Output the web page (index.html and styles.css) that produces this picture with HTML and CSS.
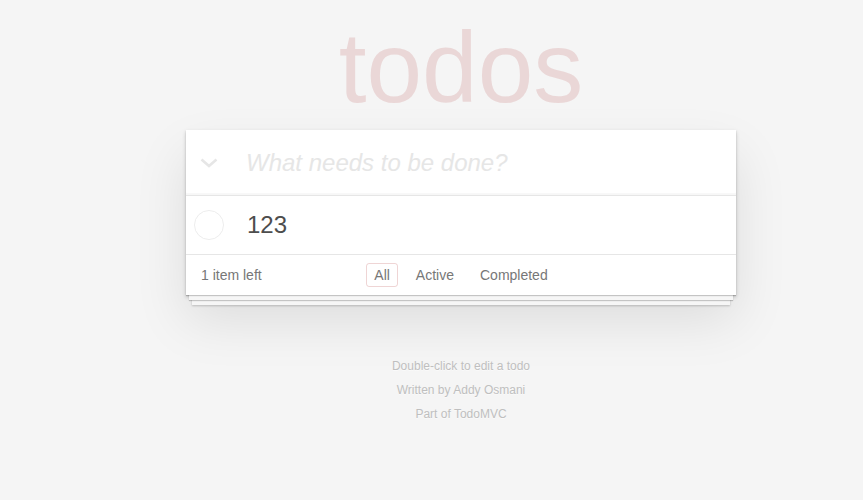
FILE: index.html
```html
<!DOCTYPE html>
<html lang="en">
<head>
<meta charset="utf-8">
<title>TodoMVC</title>
<link rel="stylesheet" href="styles.css">
</head>
<body>
<div class="page">
  <h1 class="title">todos</h1>
  <section class="app">
    <header class="header">
      <span class="toggle-all">
        <svg width="18" height="10" viewBox="0 0 18 10"><polyline points="1.5,1.5 9,8 16.5,1.5" fill="none" stroke="#e6e6e6" stroke-width="2.6" stroke-linecap="butt" stroke-linejoin="miter"/></svg>
      </span>
      <input class="new-todo" placeholder="What needs to be done?">
    </header>
    <section class="main">
      <ul class="todo-list">
        <li class="todo">
          <svg class="toggle" width="30" height="30" viewBox="0 0 30 30"><circle cx="15" cy="15" r="14.5" fill="none" stroke="#ededed" stroke-width="1"/></svg>
          <label class="todo-label">123</label>
        </li>
      </ul>
    </section>
    <footer class="footer">
      <span class="todo-count">1 item left</span>
      <ul class="filters">
        <li><a class="filter selected" href="#/">All</a></li>
        <li><a class="filter" href="#/active">Active</a></li>
        <li><a class="filter" href="#/completed">Completed</a></li>
      </ul>
      <span class="spacer"></span>
    </footer>
  </section>
  <footer class="info">
    <p>Double-click to edit a todo</p>
    <p>Written by Addy Osmani</p>
    <p>Part of TodoMVC</p>
  </footer>
</div>
</body>
</html>
```
FILE: styles.css
```css
html, body {
  margin: 0;
  padding: 0;
}

body {
  background: #f5f5f5;
  font-family: "Liberation Sans", Arial, sans-serif;
  font-size: 14px;
  line-height: 1.4em;
  color: #4d4d4d;
}

.page {
  width: 550px;
  margin-left: 186px;
}

.title {
  margin: 17px 0 13px;
  font-size: 100px;
  line-height: 100px;
  font-weight: normal;
  text-align: center;
  color: rgba(175, 47, 47, 0.15);
}

.app {
  background: #fff;
  box-shadow:
    0 1px 1px rgba(0, 0, 0, 0.2),
    0 8px 0 -3px #f6f6f6,
    0 9px 1px -3px rgba(0, 0, 0, 0.2),
    0 16px 0 -6px #f6f6f6,
    0 17px 2px -6px rgba(0, 0, 0, 0.2),
    0 2px 4px 0 rgba(0, 0, 0, 0.2),
    0 25px 50px 0 rgba(0, 0, 0, 0.1);
}

.header {
  display: flex;
  align-items: center;
  box-shadow: inset 0 -2px 1px rgba(0, 0, 0, 0.03);
}

.toggle-all {
  flex: none;
  width: 60px;
  box-sizing: border-box;
  padding-left: 14px;
  display: flex;
  align-items: center;
  margin-top: 1px;
}

.new-todo {
  flex: 1;
  min-width: 0;
  border: 0;
  outline: none;
  margin: 0;
  padding: 16px 16px 16px 0;
  height: 33px;
  background: transparent;
  font-family: "Liberation Sans", Arial, sans-serif;
  font-size: 24px;
  line-height: 33px;
  color: #4d4d4d;
}

.new-todo::placeholder {
  font-style: italic;
  color: #e6e6e6;
}

.main {
  border-top: 1px solid #e6e6e6;
}

.todo-list {
  margin: 0;
  padding: 0;
  list-style: none;
}

.todo {
  display: flex;
  align-items: center;
}

.toggle {
  flex: none;
  margin-left: 8px;
}

.todo-label {
  flex: 1;
  padding: 15px 15px 15px 23px;
  font-size: 24px;
  line-height: 28px;
  color: #4d4d4d;
}

.footer {
  display: grid;
  grid-template-columns: 1fr auto 1fr;
  align-items: center;
  border-top: 1px solid #e6e6e6;
  padding: 10px 15px;
  height: 20px;
  line-height: 19px;
  color: #777;
}

.todo-count {
  text-align: left;
}

.filters {
  display: flex;
  gap: 4px;
  margin: 0;
  padding: 0;
  list-style: none;
}

.filter {
  color: inherit;
  text-decoration: none;
  margin: 3px;
  padding: 3px 7px;
  border: 1px solid transparent;
  border-radius: 3px;
}

.filter.selected {
  border-color: rgba(175, 47, 47, 0.2);
}

.info {
  margin-top: 65px;
  text-align: center;
  color: #bfbfbf;
  font-size: 12px;
  text-shadow: 0 1px 0 rgba(255, 255, 255, 0.5);
}

.info p {
  margin: 12px 0;
  line-height: 1;
}
```
